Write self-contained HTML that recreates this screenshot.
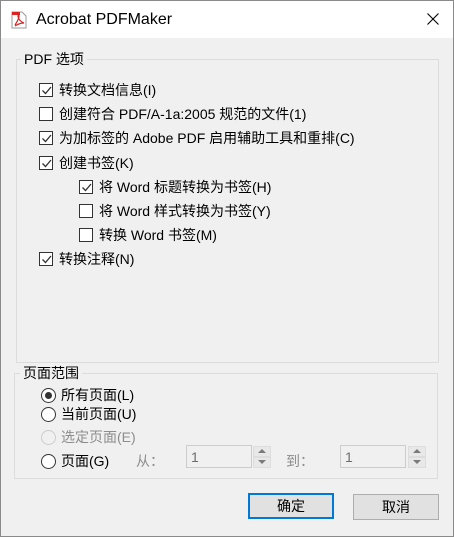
<!DOCTYPE html>
<html><head><meta charset="utf-8"><style>
*{margin:0;padding:0;box-sizing:border-box}
body{width:454px;height:537px;background:#f0f0f0;font-family:"Liberation Sans","Noto Sans CJK SC",sans-serif;font-size:14px;color:#000;position:relative;overflow:hidden;border:1px solid #8a8a8a}
.a{position:absolute;white-space:nowrap;line-height:16px}
.title{position:absolute;left:0;top:0;width:452px;height:37px;background:#fff}
.grp{position:absolute;border:1px solid #dcdcdc}
.lbl{position:absolute;background:#f0f0f0;padding:0 3px;line-height:16px}
.cb{position:absolute;width:14px;height:14px;border:1px solid #333;background:#fff}
.cb svg{position:absolute;left:1px;top:1px}
.rb{position:absolute;width:15px;height:15px;border:1px solid #333;border-radius:50%;background:#fff}
.ed{position:absolute;height:23px;border:1px solid #ccc;background:#f0f0f0;color:#6d6d6d;padding:3px 4px;line-height:16px}
.sp{position:absolute;width:18px;height:11px;border:1px solid #ddd;background:#e8e8e8}
.btn{position:absolute;height:26px;border:1px solid #adadad;background:#e1e1e1;text-align:center;line-height:24px}
</style></head><body>
<div class="title">
<svg style="position:absolute;left:10px;top:10px" width="16" height="18" viewBox="0 0 16 18"><path d="M1 1h10l4 4v12H1z" fill="#fff" stroke="#999"/><rect x="1" y="1" width="8" height="3" fill="#d22"/><path d="M4 14c2-3 4-7 4-9s-1-1-1 0c0 3 3 6 6 7-3 0-6 1-9 3" fill="none" stroke="#d22" stroke-width="1.2"/></svg>
<div class="a" style="left:35px;top:9px;font-size:16px;line-height:19px">Acrobat PDFMaker</div>
<svg style="position:absolute;left:426px;top:12px" width="12" height="12"><path d="M0.5 0.5L11.5 11.5M11.5 0.5L0.5 11.5" stroke="#000" stroke-width="1.1"/></svg>
</div>
<div class="grp" style="left:15px;top:58px;width:423px;height:304px"></div>
<div class="lbl" style="left:20px;top:50px">PDF 选项</div>

<div class="cb" style="left:38px;top:82px"><svg width="11" height="11"><path d="M1.5 5.5L4.5 8.5L10 2" fill="none" stroke="#333" stroke-width="1.3"/></svg></div>
<div class="a" style="left:58px;top:81px">转换文档信息(I)</div>
<div class="cb" style="left:38px;top:106px"></div>
<div class="a" style="left:58px;top:105px">创建符合 PDF/A-1a:2005 规范的文件(1)</div>
<div class="cb" style="left:38px;top:130px"><svg width="11" height="11"><path d="M1.5 5.5L4.5 8.5L10 2" fill="none" stroke="#333" stroke-width="1.3"/></svg></div>
<div class="a" style="left:58px;top:129px">为加标签的 Adobe PDF 启用辅助工具和重排(C)</div>
<div class="cb" style="left:38px;top:155px"><svg width="11" height="11"><path d="M1.5 5.5L4.5 8.5L10 2" fill="none" stroke="#333" stroke-width="1.3"/></svg></div>
<div class="a" style="left:58px;top:154px">创建书签(K)</div>
<div class="cb" style="left:78px;top:179px"><svg width="11" height="11"><path d="M1.5 5.5L4.5 8.5L10 2" fill="none" stroke="#333" stroke-width="1.3"/></svg></div>
<div class="a" style="left:98px;top:178px">将 Word 标题转换为书签(H)</div>
<div class="cb" style="left:78px;top:203px"></div>
<div class="a" style="left:98px;top:202px">将 Word 样式转换为书签(Y)</div>
<div class="cb" style="left:78px;top:227px"></div>
<div class="a" style="left:98px;top:226px">转换 Word 书签(M)</div>
<div class="cb" style="left:38px;top:251px"><svg width="11" height="11"><path d="M1.5 5.5L4.5 8.5L10 2" fill="none" stroke="#333" stroke-width="1.3"/></svg></div>
<div class="a" style="left:58px;top:250px">转换注释(N)</div>

<div class="grp" style="left:13px;top:372px;width:424px;height:106px"></div>
<div class="lbl" style="left:19px;top:364px">页面范围</div>
<div class="rb" style="left:40px;top:387px"><div style="position:absolute;left:3px;top:3px;width:7px;height:7px;border-radius:50%;background:#333"></div></div>
<div class="a" style="left:60px;top:386px">所有页面(L)</div>
<div class="rb" style="left:40px;top:406px"></div>
<div class="a" style="left:60px;top:405px">当前页面(U)</div>
<div class="rb" style="left:40px;top:429px;border-color:#ccc;background:#f0f0f0"></div>
<div class="a" style="left:60px;top:428px;color:#8d8d8d">选定页面(E)</div>
<div class="rb" style="left:40px;top:453px"></div>
<div class="a" style="left:60px;top:452px">页面(G)</div>
<div class="a" style="left:135px;top:452px;color:#8d8d8d">从：</div>
<div class="ed" style="left:185px;top:444px;width:66px">1</div>
<div class="sp" style="left:252px;top:445px"></div><div class="sp" style="left:252px;top:456px"></div>
<div class="a" style="left:285px;top:452px;color:#8d8d8d">到：</div>
<div class="ed" style="left:339px;top:444px;width:66px">1</div>
<div class="sp" style="left:407px;top:445px"></div><div class="sp" style="left:407px;top:456px"></div>
<svg style="position:absolute;left:256px;top:448px" width="10" height="18"><path d="M1 4L5 0L9 4Z M1 11L9 11L5 15Z" fill="#7a7a7a"/></svg>
<svg style="position:absolute;left:411px;top:448px" width="10" height="18"><path d="M1 4L5 0L9 4Z M1 11L9 11L5 15Z" fill="#7a7a7a"/></svg>

<div class="btn" style="left:247px;top:492px;width:86px;border:2px solid #0078d7;line-height:22px">确定</div>
<div class="btn" style="left:352px;top:493px;width:86px">取消</div>
</body></html>
